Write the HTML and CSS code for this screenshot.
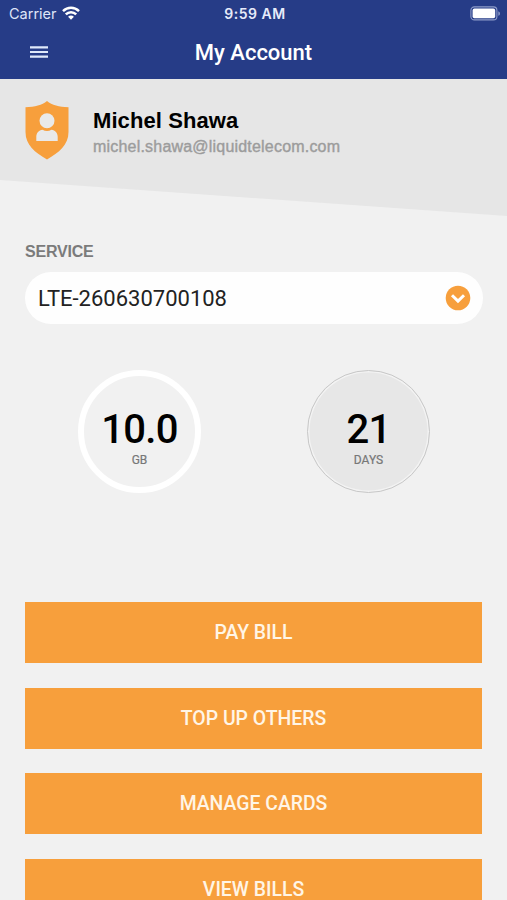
FILE: index.html
```
<!DOCTYPE html>
<html lang="en">
<head>
	<meta charset="utf-8">
	<meta name="viewport" content="width=device-width, initial-scale=1">
	<title>My Account</title>
	<link rel="stylesheet" href="styles.css">
</head>
<body>
	<!-- status bar and title -->
	<header class="header">
		<div class="status-bar">
			<div class="carrier">
				<span class="carrier-name">Carrier</span>
				<svg class="wifi" width="18" height="14" viewBox="0 0 18 14" fill="none" stroke="#fff" stroke-width="2.5">
					<path d="M1 5.1C5.6.7 12.4.7 17 5.1"/>
					<path d="M3.800 8.400c2.900-2.900 7.500-2.900 10.400 0"/>
					<path d="M6.100 10.700c1.700-1.600 4.100-1.600 5.800 0L9 13.700z" fill="#fff" stroke="none"/>
				</svg>
			</div>
			<div class="time">9:59 AM</div>
			<svg class="battery" width="31" height="15" viewBox="0 0 31 15">
				<rect x=".9" y=".9" width="26" height="13" rx="3.5" fill="none" stroke="#8e9cc9" stroke-width="1.1"/>
				<rect x="2.6" y="2.6" width="22.6" height="9.6" rx="1.8" fill="#fff"/>
				<path d="M28.3 5.2c2.2.9 2.2 3.7 0 4.6z" fill="#8e9cc9"/>
			</svg>
		</div>
		<div class="nav-bar">
			<button class="menu-button" aria-label="Menu">
				<svg width="18" height="12" viewBox="0 0 18 12" stroke="#dfe9fb" stroke-width="2.2">
					<path d="M0 1.400h18M0 6h18M0 10.600h18"/>
				</svg>
			</button>
			<h1>My Account</h1>
		</div>
	</header>

	<!-- user details -->
	<section class="profile">
		<svg class="shield" width="44" height="60" viewBox="0 0 44 60">
			<path d="M22 1C17 5 10 7.2.5 7.200V32c0 13 9.500 20.500 21.500 27.500C34 52.500 43.500 45 43.500 32V7.200C34 7.200 27 5 22 1z" fill="#f79f3c"/>
			<circle cx="22" cy="20.700" r="7.500" fill="#e9e9e9"/>
			<path d="M11.300 41v-4.200c0-3.800 2.500-6.600 6.200-7.100 2.700 1.700 6.300 1.700 9 0 3.700.5 6.200 3.300 6.200 7.100V41z" fill="#e9e9e9"/>
		</svg>
		<div class="user">
			<h2>Michel Shawa</h2>
			<p>michel.shawa@liquidtelecom.com</p>
		</div>
	</section>

	<main class="content">
		<!-- service selector -->
		<div class="label">SERVICE</div>
		<button class="select">
			<span class="select-value">LTE-260630700108</span>
			<svg width="26" height="26" viewBox="0 0 26 26">
				<circle cx="13" cy="13" r="12.3" fill="#f79f3c"/>
				<path d="M7 10.200l6 5.900 6-5.900" fill="none" stroke="#fff" stroke-width="3"/>
			</svg>
		</button>

		<!-- balance -->
		<div class="stats">
			<div class="circle data">
				<span class="value">10.0</span>
				<span class="unit">GB</span>
			</div>
			<div class="circle days">
				<span class="value">21</span>
				<span class="unit">DAYS</span>
			</div>
		</div>

		<!-- actions -->
		<div class="actions">
			<button>PAY BILL</button>
			<button>TOP UP OTHERS</button>
			<button>MANAGE CARDS</button>
			<button>VIEW BILLS</button>
		</div>
	</main>
</body>
</html>
```

FILE: styles.css
```
* {
	box-sizing: border-box;
}

body {
	margin: 0;
	height: 900px;
	overflow: hidden;
	background-color: #f1f1f1;
	font-family: Roboto, sans-serif;
}

h1, h2, p {
	margin: 0;
}

button {
	border: 0;
	padding: 0;
	font-family: inherit;
}

/* styles for the header */
.header {
	height: 79px;
	background-color: #263c87;
	color: white;
}

.status-bar {
	display: grid;
	grid-template-columns: 1fr auto 1fr;
	align-items: center;
	height: 27px;
	padding: 0 6px 0 9px;
	font-family: Inter, sans-serif;
}

.carrier {
	display: flex;
	align-items: center;
	gap: 5px;
}

.carrier-name {
	font-size: 14.5px;
	color: #dfe5f8;
}

.wifi {
	margin-top: -2px;
}

.time {
	font-size: 14px;
	font-weight: 600;
	letter-spacing: 0.5px;
	color: #e6ebfa;
}

.battery {
	justify-self: end;
}

.nav-bar {
	display: grid;
	grid-template-columns: 48px 1fr 48px;
	align-items: center;
	height: 50px;
}

.menu-button {
	width: 18px;
	height: 12px;
	margin-left: 30px;
	background: none;
}

.menu-button svg {
	display: block;
}

.nav-bar h1 {
	font-size: 22px;
	font-weight: 500;
	text-align: center;
}

/* styles for the user section */
.profile {
	display: flex;
	gap: 24px;
	height: 137px;
	padding: 21px 25px 0;
	background-color: #e6e6e6;
	clip-path: polygon(0 0, 100% 0, 100% 100%, 0 101px);
}

.user {
	padding-top: 8px;
	font-family: "Liberation Sans", sans-serif;
}

.user h2 {
	font-size: 22px;
	line-height: 26px;
	letter-spacing: 0.08px;
}

.user p {
	font-size: 16px;
	line-height: 26px;
	letter-spacing: 0.2px;
	color: #9c9c9c;
	-webkit-text-stroke: 0.4px #9c9c9c;
}

/* styles for the service selector */
.content {
	padding: 26px 25px 0;
}

.label {
	font-family: "Liberation Sans", sans-serif;
	font-size: 16px;
	font-weight: bold;
	line-height: 20px;
	letter-spacing: -0.2px;
	color: #7b7b7b;
}

.select {
	display: flex;
	align-items: center;
	justify-content: space-between;
	width: 458px;
	height: 52px;
	margin-top: 10px;
	padding: 0 12px 0 13px;
	border-radius: 26px;
	background-color: #fefefe;
}

.select-value {
	font-size: 22px;
	color: #222;
}

/* styles for the balance circles */
.stats {
	display: flex;
	justify-content: space-around;
	width: 458px;
	margin-top: 46px;
}

.circle {
	display: flex;
	flex-direction: column;
	align-items: center;
	width: 123px;
	height: 123px;
	padding-top: 35px;
	border-radius: 50%;
}

.data {
	border: 6px solid white;
	padding-top: 30px;
}

.days {
	border: 1px solid #c8c8c8;
	background-color: #e7e7e7;
	box-shadow: inset 0 0 0 1.5px #f3f3f3;
}

.value {
	font-size: 40px;
	font-weight: 500;
	line-height: 48px;
	letter-spacing: -0.7px;
	color: black;
}

.unit {
	font-size: 12px;
	line-height: 13px;
	color: #777;
	-webkit-text-stroke: 0.2px #777;
}

/* styles for the action buttons */
.actions {
	display: flex;
	flex-direction: column;
	gap: 24.5px;
	margin-top: 109px;
}

.actions button {
	height: 61px;
	background-color: #f79f3c;
	color: #fff5e6;
	font-size: 19.4px;
	font-weight: 500;
}
```
